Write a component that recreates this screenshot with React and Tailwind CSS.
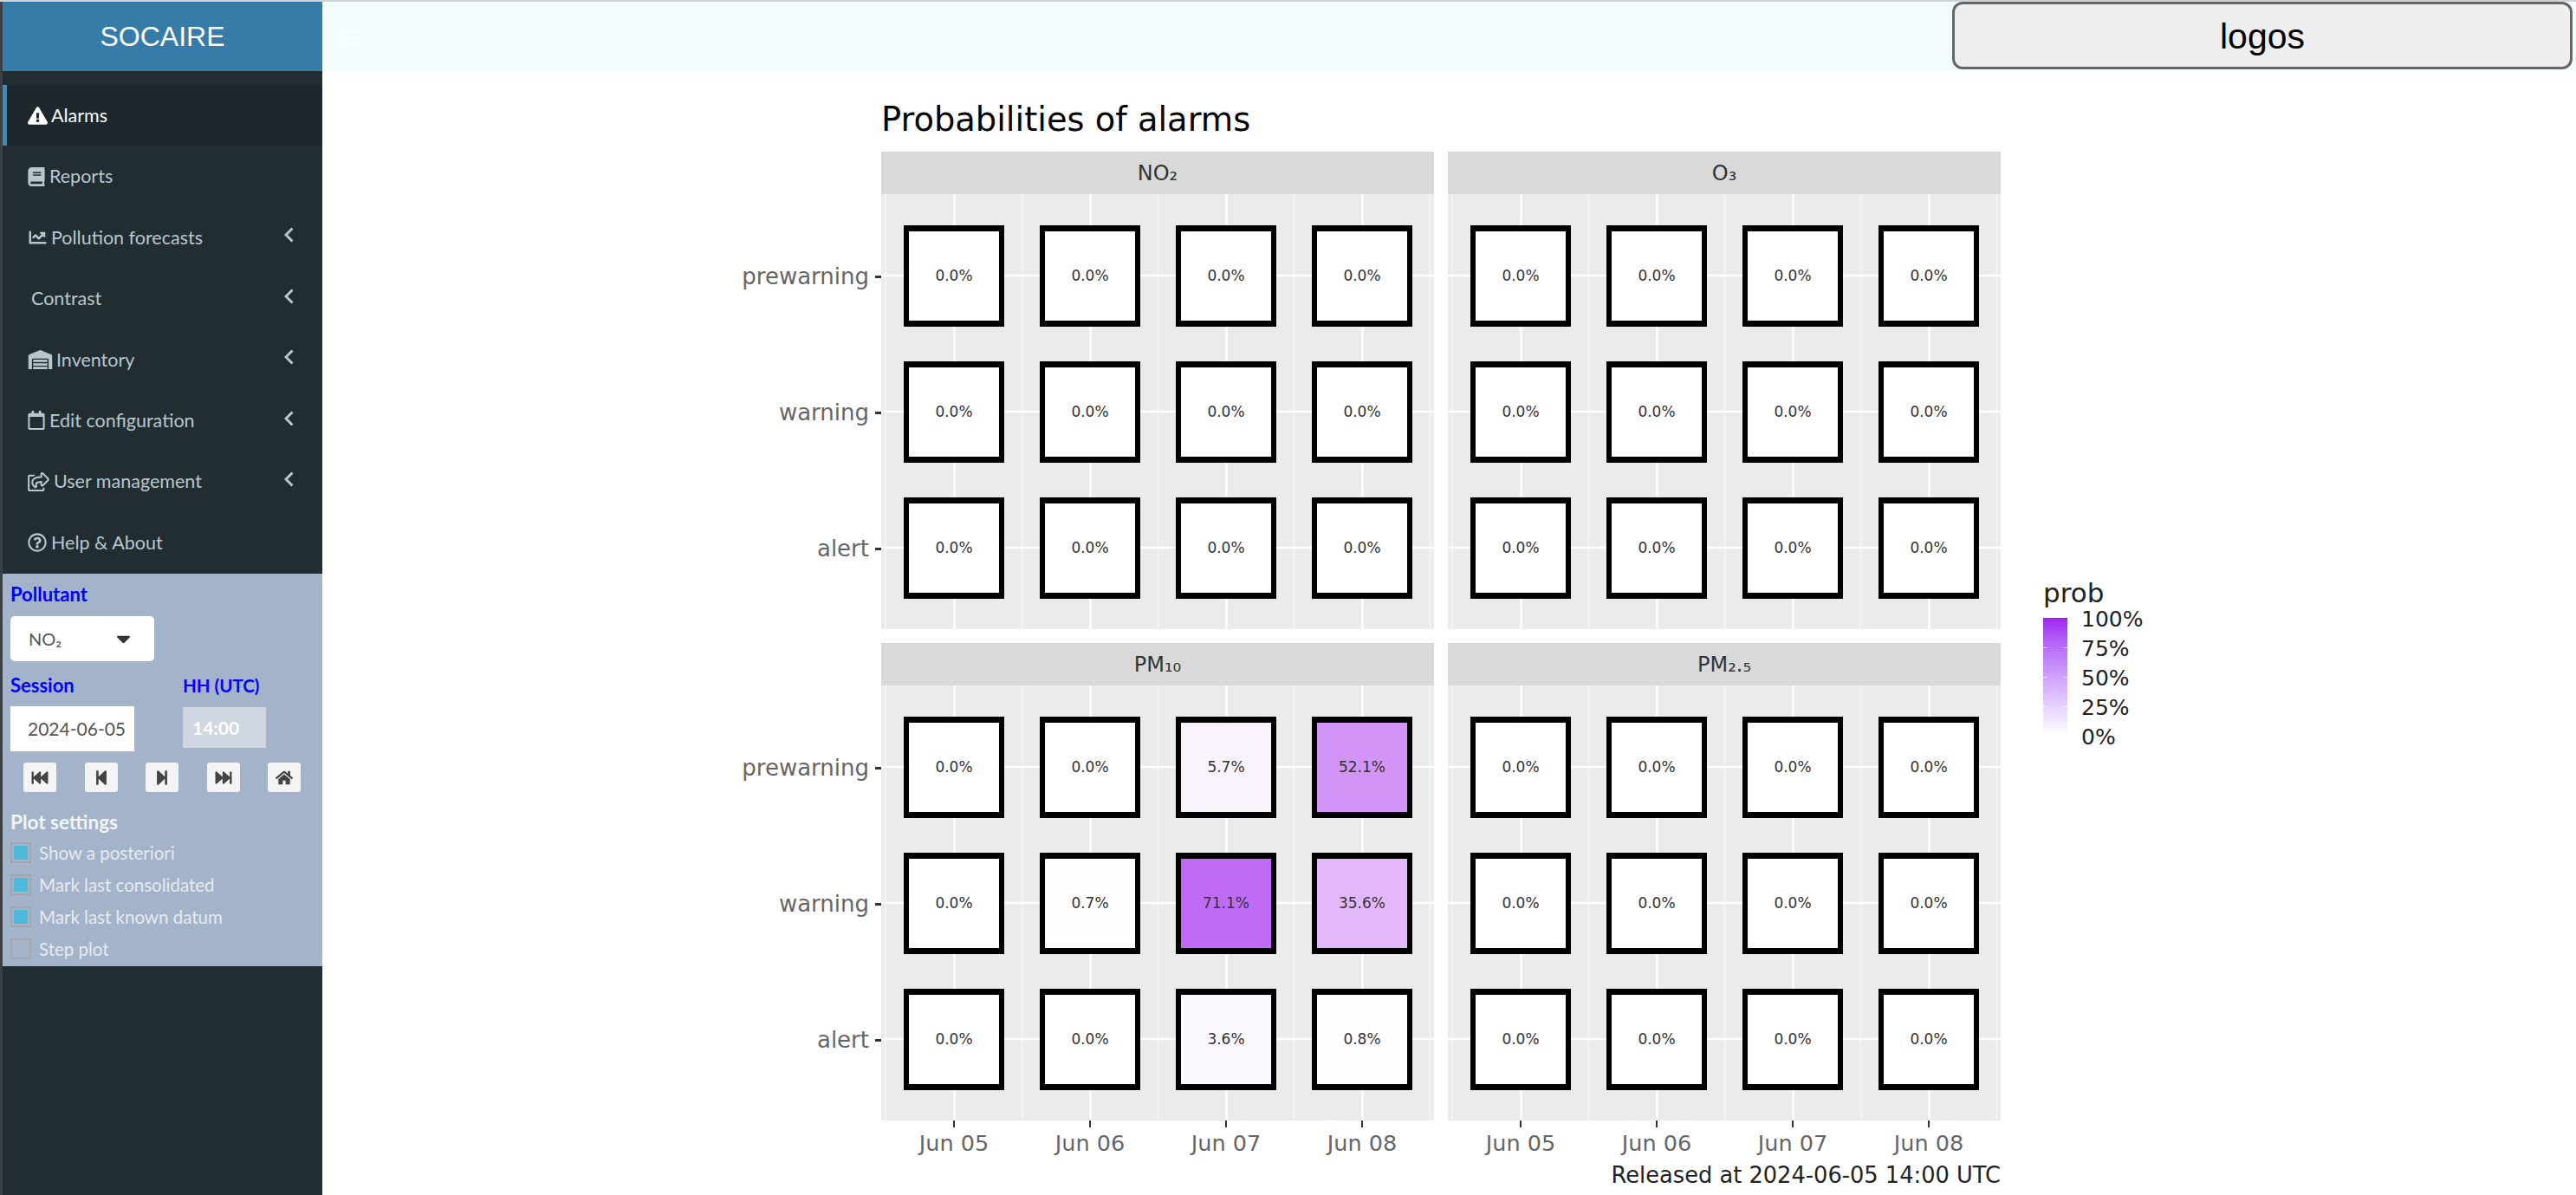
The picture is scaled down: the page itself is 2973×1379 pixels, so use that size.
import React from 'react';
import {
  FaBars,
  FaBook,
  FaCaretDown,
  FaChartLine,
  FaExclamationTriangle,
  FaFastBackward,
  FaFastForward,
  FaHome,
  FaRegCalendar,
  FaRegQuestionCircle,
  FaRegShareSquare,
  FaStepBackward,
  FaStepForward,
  FaWarehouse,
} from 'react-icons/fa';

const MENU = [
  { label: 'Alarms', icon: FaExclamationTriangle, iconClass: 'w-[23px] h-[21px]', gap: 'ml-[4px]', active: true },
  { label: 'Reports', icon: FaBook, iconClass: 'w-[20px] h-[22px]', gap: 'ml-[5px]' },
  { label: 'Pollution forecasts', icon: FaChartLine, iconClass: 'w-[23px] h-[20px]', gap: 'ml-[4px]', caret: true },
  { label: 'Contrast', gap: 'ml-[4px]', caret: true },
  { label: 'Inventory', icon: FaWarehouse, iconClass: 'w-[29px] h-[22px]', gap: 'ml-[4px]', caret: true },
  { label: 'Edit configuration', icon: FaRegCalendar, iconClass: 'w-[20px] h-[22px]', gap: 'ml-[5px]', caret: true },
  { label: 'User management', icon: FaRegShareSquare, iconClass: 'w-[25px] h-[22px]', gap: 'ml-[5px]', caret: true },
  { label: 'Help & About', icon: FaRegQuestionCircle, iconClass: 'w-[22px] h-[22px]', gap: 'ml-[5px]' },
];

const NAV_BUTTONS = [FaFastBackward, FaStepBackward, FaStepForward, FaFastForward, FaHome];
const SETTINGS = [
  { label: 'Show a posteriori', checked: true },
  { label: 'Mark last consolidated', checked: true },
  { label: 'Mark last known datum', checked: true },
  { label: 'Step plot', checked: false },
];

const DAYS = ['Jun 05', 'Jun 06', 'Jun 07', 'Jun 08'];
const LEVELS = ['prewarning', 'warning', 'alert'];
const ZEROES = [
  ['0.0%', '0.0%', '0.0%', '0.0%'],
  ['0.0%', '0.0%', '0.0%', '0.0%'],
  ['0.0%', '0.0%', '0.0%', '0.0%'],
];
const PM10 = [
  ['0.0%', '0.0%', '5.7%', '52.1%'],
  ['0.0%', '0.7%', '71.1%', '35.6%'],
  ['0.0%', '0.0%', '3.6%', '0.8%'],
];
const TILE_COLORS = {
  '5.7%': 'bg-[#faf3fe]',
  '52.1%': 'bg-[#d394f7]',
  '71.1%': 'bg-[#c06bf5]',
  '35.6%': 'bg-[#e2b8fb]',
  '3.6%': 'bg-[#fcf8ff]',
  '0.7%': 'bg-[#fffeff]',
  '0.8%': 'bg-[#fffdff]',
};

// major lines run through the tile centres, minor lines fall between them
const MAJOR_X = [84.5, 241.5, 398.5, 555.5];
const MINOR_X = [5, 162.5, 319.5, 476.5, 633.5];
const MAJOR_Y = [94, 251, 408];

function SideItem({ item }) {
  const Icon = item.icon;
  return (
    <div
      className={`flex h-[70.4px] items-center pr-[33px] ${
        item.active ? 'border-l-[5px] border-[#3c8dbc] bg-[#1e282c] pl-[24px] text-white' : 'pl-[29px] text-[#b8c7ce]'
      }`}
    >
      {Icon && <Icon className={`shrink-0 ${item.iconClass}`} />}
      <span className={`text-[21.5px] ${item.gap}`}>{item.label}</span>
      {item.caret && (
        <svg viewBox="0 0 11 18" className="mb-[5px] ml-auto h-[18px] w-[11px]" fill="none" stroke="currentColor" strokeWidth="3">
          <path d="M9.5 1.5 2 9l7.5 7.5" />
        </svg>
      )}
    </div>
  );
}

function Sidebar() {
  return (
    <aside className="flex w-[372px] shrink-0 flex-col border-l-[3px] border-[#3a4045] bg-[#222d32] font-['Lato',sans-serif]">
      <div className="flex h-[80px] shrink-0 items-center justify-center bg-[#377ca8] font-['Liberation_Sans',sans-serif] text-[32px] text-white">
        SOCAIRE
      </div>
      <nav className="pt-[16px]">
        {MENU.map((item) => (
          <SideItem key={item.label} item={item} />
        ))}
      </nav>
      <section className="mt-[1px] h-[453px] bg-[#a3b4ca] pl-[9px] pt-[12px]">
        <div className="text-[22px] leading-[24px] font-bold text-[#0000ff]">Pollutant</div>
        <div className="mt-[13px] flex h-[52px] w-[166px] items-center justify-between rounded-[5px] bg-white pl-[21px] pr-[27px] text-[20px] text-[#555]">
          NO₂
          <FaCaretDown className="h-[26px] w-[17px] text-[#333]" />
        </div>
        <div className="mt-[16px] flex">
          <div className="w-[199px]">
            <div className="text-[22px] leading-[24px] font-bold text-[#0000ff]">Session</div>
            <div className="mt-[12px] flex h-[52px] w-[143px] items-center bg-white pl-[20px] text-[21px] text-[#555]">
              2024-06-05
            </div>
          </div>
          <div>
            <div className="text-[20.5px] leading-[24px] font-bold text-[#0000ff]">HH (UTC)</div>
            <div className="mt-[13px] flex h-[47px] w-[96px] items-center bg-[#d1d7e1] pl-[11px] text-[21px] font-bold text-white">
              14:00
            </div>
          </div>
        </div>
        <div className="mt-[13px] flex gap-[32.5px] pl-[15px]">
          {NAV_BUTTONS.map((Icon, i) => (
            <div key={i} className="flex h-[34px] w-[38px] items-center justify-center rounded-[3px] bg-[#f4f4f4] text-[#444]">
              <Icon className="h-[19px] w-[20px]" />
            </div>
          ))}
        </div>
        <div className="mt-[23px] text-[22.5px] leading-[24px] font-bold text-[#f2f4f7]">Plot settings</div>
        <div className="mt-[11px] flex flex-col gap-[13px]">
          {SETTINGS.map((s) => (
            <div key={s.label} className="flex h-[24px] items-center">
              <div className="flex h-[24px] w-[24px] items-center justify-center border-2 border-[#a0a6ac]">
                {s.checked && <div className="h-[16px] w-[16px] bg-[#4fb9dc]" />}
              </div>
              <span className="ml-[9px] text-[20.5px] text-[#e6eaf0]">{s.label}</span>
            </div>
          ))}
        </div>
      </section>
    </aside>
  );
}

function Gridlines() {
  return (
    <svg className="absolute inset-0 h-full w-full" aria-hidden="true">
      {MINOR_X.map((x) => (
        <line key={x} x1={x} x2={x} y1="0" y2="100%" stroke="#f6f6f6" strokeWidth="1.5" />
      ))}
      {MAJOR_X.map((x) => (
        <line key={x} x1={x} x2={x} y1="0" y2="100%" stroke="#ffffff" strokeWidth="2.5" />
      ))}
      {MAJOR_Y.map((y) => (
        <line key={y} x1="0" x2="100%" y1={y} y2={y} stroke="#ffffff" strokeWidth="2.5" />
      ))}
    </svg>
  );
}

function Facet({ name, values }) {
  return (
    <div className="w-[638px]">
      <div className="flex h-[49px] items-center justify-center bg-[#d9d9d9] text-[24px] text-[#333]">{name}</div>
      <div className="relative h-[502px] bg-[#ebebeb]">
        <Gridlines />
        <div className="relative grid grid-cols-[116px_116px_116px_116px] gap-x-[41px] gap-y-[40px] pl-[26px] pt-[36px]">
          {values.flat().map((v, i) => (
            <div
              key={i}
              className={`flex h-[117px] items-center justify-center border-x-[6px] border-y-[7px] border-black text-[17px] text-[#333] ${
                TILE_COLORS[v] || 'bg-white'
              }`}
            >
              {v}
            </div>
          ))}
        </div>
      </div>
    </div>
  );
}

function LevelAxis() {
  return (
    <div className="flex w-[177px] shrink-0 flex-col items-end gap-[139px] pt-[135px]">
      {LEVELS.map((level) => (
        <div key={level} className="flex h-[18px] items-center text-[26px] text-[#666]">
          {level}
          <span className="ml-[7px] h-[3px] w-[7px] bg-[#333]" />
        </div>
      ))}
    </div>
  );
}

function DayAxis() {
  return (
    <div className="grid w-[638px] grid-cols-[116px_116px_116px_116px] gap-x-[41px] pl-[26px] text-[25.5px] text-[#666]">
      {DAYS.map((d) => (
        <div key={d} className="flex flex-col items-center">
          <span className="h-[8px] w-[2px] bg-[#333]" />
          <span className="mt-[3px] leading-[30px]">{d}</span>
        </div>
      ))}
    </div>
  );
}

function Legend() {
  return (
    <div className="ml-[49px] mt-[584px] w-[130px] text-[#222]">
      <div className="text-[31px] leading-[36px]">prob</div>
      <div className="mt-[11px] flex">
        <div className="relative h-[135px] w-[28px] bg-gradient-to-b from-[#a020f0] to-white">
          <div className="absolute inset-x-0 top-[34px] flex justify-between">
            <span className="h-[1px] w-[5px] bg-white/70" />
            <span className="h-[1px] w-[5px] bg-white/70" />
          </div>
          <div className="absolute inset-x-0 top-[68px] flex justify-between">
            <span className="h-[1px] w-[5px] bg-white/70" />
            <span className="h-[1px] w-[5px] bg-white/70" />
          </div>
          <div className="absolute inset-x-0 top-[102px] flex justify-between">
            <span className="h-[1px] w-[5px] bg-white/70" />
            <span className="h-[1px] w-[5px] bg-white/70" />
          </div>
        </div>
        <div className="ml-[16px] flex h-[138px] flex-col justify-between pt-[1px] text-[25px] leading-[1px]">
          <span>100%</span>
          <span>75%</span>
          <span>50%</span>
          <span>25%</span>
          <span>0%</span>
        </div>
      </div>
    </div>
  );
}

function AlarmPlot() {
  return (
    <div className="flex pl-[468px] font-['DejaVu_Sans',sans-serif]">
      <div>
        <div className="flex">
          <div className="w-[177px] shrink-0" />
          <h1 className="h-[93px] pt-[33px] text-[38.4px] leading-[46px] text-black">Probabilities of alarms</h1>
        </div>
        <div className="flex">
          <LevelAxis />
          <div className="flex gap-[16px]">
            <Facet name="NO₂" values={ZEROES} />
            <Facet name="O₃" values={ZEROES} />
          </div>
        </div>
        <div className="mt-[16px] flex">
          <LevelAxis />
          <div className="flex gap-[16px]">
            <Facet name="PM₁₀" values={PM10} />
            <Facet name="PM₂.₅" values={ZEROES} />
          </div>
        </div>
        <div className="flex gap-[16px] pl-[177px]">
          <DayAxis />
          <DayAxis />
        </div>
        <div className="mt-[7px] text-right text-[25.7px] leading-[30px] text-[#222]">Released at 2024-06-05 14:00 UTC</div>
      </div>
      <Legend />
    </div>
  );
}

export default function App() {
  return (
    <div className="flex h-[1379px] w-[2973px] overflow-hidden border-t-2 border-[#cfd3d5] bg-white">
      <Sidebar />
      <main className="min-w-0 flex-1">
        <header className="flex h-[80px] items-start justify-between bg-[#f3fdfd] pr-[4px]">
          <FaBars className="ml-[23px] mt-[29px] h-[24px] w-[22px] text-[#fbfefe]" />
          <div className="flex h-[78px] w-[716px] items-center justify-center rounded-[12px] border-[3px] border-[#666] bg-[#eeeeee] pt-[4px] font-['Liberation_Sans',sans-serif] text-[41px] text-black">
            logos
          </div>
        </header>
        <AlarmPlot />
      </main>
    </div>
  );
}
